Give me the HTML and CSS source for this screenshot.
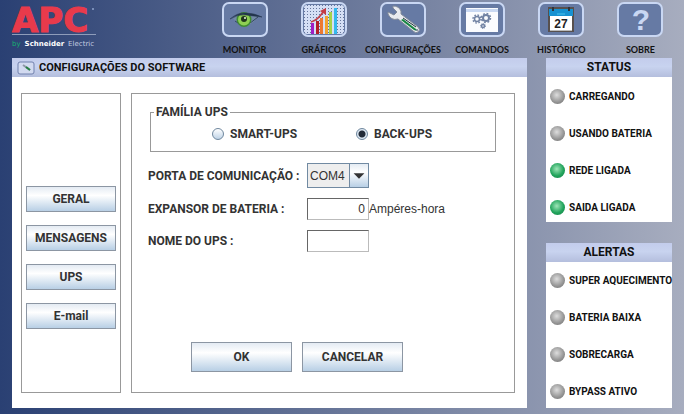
FILE: index.html
```html
<!DOCTYPE html>
<html lang="pt-BR">
<head>
  <meta charset="UTF-8" />
  <meta name="viewport" content="width=device-width, initial-scale=1.0"/>
  <title>APC - Configurações do Software</title>
  <link rel="stylesheet" href="styles.css">
</head>
<body>

  <header>
    <div class="logo">
      <div class="brand">APC<span class="dot"></span></div>
      <div class="tagline"><span class="by">by</span> <b>Schneider</b> <span class="electric">Electric</span></div>
    </div>

    <nav>
      <a href="#monitor">
        <svg class="icon" viewBox="0 0 46 35">
          <rect class="frame" x="1" y="1" width="44" height="33" rx="6"/>
          <path d="M11 16 Q22 8 36 15 Q30 23 22 24 Q15 22 11 16Z" fill="#7389a6"/>
          <path d="M13 19 Q22 28 36 15" fill="none" stroke="#32455f" stroke-width="1"/>
          <circle cx="22" cy="17.500" r="7.500" fill="#408b32"/>
          <circle cx="22" cy="17.500" r="6" fill="#8fcf53"/>
          <circle cx="22" cy="17" r="3" fill="#20351c"/>
          <circle cx="23" cy="16" r="1" fill="#e8f7d9"/>
          <path d="M8 17 Q16 10 24 11 Q32 11 40 15 Q31 14 24 13 Q16 12 8 17Z" fill="#23354c" stroke="#23354c" stroke-width="0.500"/>
        </svg>
        <span>MONITOR</span>
      </a>
      <a href="#graficos">
        <svg class="icon" viewBox="0 0 46 35">
          <defs>
            <pattern id="dots" width="3" height="3" patternUnits="userSpaceOnUse">
              <rect width="3" height="3" fill="#d5dff5"/>
              <rect width="1" height="1" fill="#66769c"/>
            </pattern>
          </defs>
          <rect class="frame" x="1" y="1" width="44" height="33" rx="6"/>
          <rect x="3" y="3" width="40" height="29" rx="3" fill="url(#dots)"/>
          <rect x="10" y="21" width="3" height="11" fill="#a01fc4"/>
          <rect x="15" y="19" width="3" height="13" fill="#b51e25"/>
          <rect x="19" y="16" width="3" height="16" fill="#ed7932"/>
          <rect x="24" y="14" width="3" height="18" fill="#f3a330"/>
          <rect x="28" y="10" width="3" height="22" fill="#a6d34a"/>
          <rect x="33" y="6" width="3" height="26" fill="#34b9ed"/>
          <path d="M10 20 Q17 18 22 10" fill="none" stroke="#c43c45" stroke-width="1.500"/>
          <path d="M19 9 L25 6 L25 13Z" fill="#c43c45"/>
        </svg>
        <span>GRÁFICOS</span>
      </a>
      <a href="#configuracoes">
        <svg class="icon" viewBox="0 0 46 35">
          <rect class="frame" x="1" y="1" width="44" height="33" rx="6"/>
          <path d="M13 4 Q19 4 21 9 L21 12 L38 25 Q41 28 38 30 Q36 32 33 29 L18 17 Q11 19 8 12 L8 10 L14 13 L17 10 L13 6Z" fill="#e9ebef" stroke="#828b9a" stroke-width="1"/>
          <path d="M23 17 L36 27 Q38 30 34 28 L21 18Z" fill="#168541"/>
          <path d="M23 16 L36 25" stroke="#20333a" stroke-width="1"/>
          <circle cx="37" cy="28" r="1" fill="#6e7989"/>
        </svg>
        <span>CONFIGURAÇÕES</span>
      </a>
      <a href="#comandos">
        <svg class="icon" viewBox="0 0 46 35">
          <rect class="frame" x="1" y="1" width="44" height="33" rx="6"/>
          <rect x="7" y="6" width="32" height="24" fill="#fafbfe"/>
          <path d="M7 8.500 H39" stroke="#c9d8f2" stroke-width="3"/>
          <g fill="none" stroke="#7182a3">
            <circle cx="18" cy="17" r="2.500" stroke-width="1.500"/>
            <circle cx="18" cy="17" r="4" stroke-width="1.500" stroke-dasharray="1.600 1.540"/>
            <circle cx="27" cy="16" r="3" stroke-width="2"/>
            <circle cx="27" cy="16" r="4.500" stroke-width="1.500" stroke-dasharray="1.800 1.730"/>
            <circle cx="24" cy="24" r="1.500" stroke-width="1.500"/>
            <circle cx="24" cy="24" r="2.500" stroke-width="1" stroke-dasharray="1 0.960"/>
          </g>
        </svg>
        <span>COMANDOS</span>
      </a>
      <a href="#historico">
        <svg class="icon" viewBox="0 0 46 35">
          <rect class="frame" x="1" y="1" width="44" height="33" rx="6"/>
          <rect x="10" y="5" width="26" height="25" fill="#57504e"/>
          <rect x="12" y="14" width="22" height="14" fill="#fff"/>
          <rect x="11" y="7" width="24" height="7" fill="#1791d1"/>
          <path d="M15 5 v4 M31 5 v4" stroke="#30343c" stroke-width="2"/>
          <path d="M19 12 h8" stroke="#49c4ef" stroke-width="1"/>
          <path d="M12 28.500 h22" stroke="#bbb" stroke-width="1"/>
          <text x="23" y="26" text-anchor="middle" class="day">27</text>
        </svg>
        <span>HISTÓRICO</span>
      </a>
      <a href="#sobre">
        <svg class="icon" viewBox="0 0 46 35">
          <rect class="frame" x="1" y="1" width="44" height="33" rx="6"/>
          <text x="24" y="28" text-anchor="middle" class="help">?</text>
        </svg>
        <span>SOBRE</span>
      </a>
    </nav>
  </header>

  <main>
    <section class="window">
      <h1 class="bar">
        <svg class="small-icon" viewBox="0 0 18 14">
          <rect x="1" y="1" width="16" height="12" rx="2" fill="#d2daf0" stroke="#7181ad" stroke-width="1"/>
          <path d="M6 4 L13 9" stroke="#8b97a4" stroke-width="2"/>
          <path d="M9 6 L13 9" stroke="#268044" stroke-width="2"/>
        </svg>
        CONFIGURAÇÕES DO SOFTWARE
      </h1>
      <div class="content">
        <div class="side-menu">
          <button type="button">GERAL</button>
          <button type="button">MENSAGENS</button>
          <button type="button">UPS</button>
          <button type="button">E-mail</button>
        </div>

        <form class="panel">
          <fieldset>
            <legend>FAMÍLIA UPS</legend>
            <label><input type="radio" name="family" value="smart"> SMART-UPS</label>
            <label><input type="radio" name="family" value="back" checked> BACK-UPS</label>
          </fieldset>

          <div class="fields">
            <label for="port">PORTA DE COMUNICAÇÃO :</label>
            <div class="select-box">
              <select id="port">
                <option>COM4</option>
              </select>
              <svg class="arrow" viewBox="0 0 20 25">
                <path d="M4 10 h12 l-6 6z" fill="#333"/>
              </svg>
            </div>

            <label for="battery">EXPANSOR DE BATERIA :</label>
            <div class="unit-box">
              <input type="text" id="battery" class="number" value="0"><span>Ampéres-hora</span>
            </div>

            <label for="upsName">NOME DO UPS :</label>
            <input type="text" id="upsName">
          </div>

          <div class="actions">
            <button type="submit">OK</button>
            <button type="button">CANCELAR</button>
          </div>
        </form>
      </div>
    </section>

    <aside>
      <section class="leds">
        <h2 class="bar">STATUS</h2>
        <ul>
          <li><span class="led"></span>CARREGANDO</li>
          <li><span class="led"></span>USANDO BATERIA</li>
          <li><span class="led on"></span>REDE LIGADA</li>
          <li><span class="led on"></span>SAIDA LIGADA</li>
        </ul>
      </section>

      <section class="leds alerts">
        <h2 class="bar">ALERTAS</h2>
        <ul>
          <li><span class="led"></span>SUPER AQUECIMENTO</li>
          <li><span class="led"></span>BATERIA BAIXA</li>
          <li><span class="led"></span>SOBRECARGA</li>
          <li><span class="led"></span>BYPASS ATIVO</li>
        </ul>
      </section>
    </aside>
  </main>

</body>
</html>
```
FILE: styles.css
```css
* {
  margin: 0;
  padding: 0;
  box-sizing: border-box;
}

body {
  min-height: 100vh;
  font-family: Roboto, "Liberation Sans", Arial, sans-serif;
  font-size: 12px;
  color: #333;
  background: linear-gradient(to right, #2a4073, #a7adbf);
}

header {
  display: flex;
  height: 58px;
  padding: 0 4px 0 12px;
}

/* Logo */
.logo {
  width: 193px;
}

.brand {
  display: flex;
  width: 88px;
  height: 34px;
  color: #e83a4b;
  font-family: "DejaVu Sans", sans-serif;
  font-size: 34px;
  font-weight: bold;
  line-height: 40px;
  -webkit-text-stroke: 1px #e83a4b;
}

.dot {
  width: 2px;
  height: 2px;
  margin: 8px 0 0 4px;
  border-radius: 50%;
  background: #8fa3cc;
}

.tagline {
  display: flex;
  gap: 4px;
  width: 84px;
  padding-top: 4px;
  border-top: 1px solid #8e9cba;
  color: #fff;
  font-family: "DejaVu Sans", sans-serif;
  font-size: 7px;
  line-height: 10px;
}

.by {
  color: #16b070;
}

.electric {
  color: #c3cce0;
}

/* Top menu */
nav {
  flex: 1;
  display: flex;
}

nav a {
  flex: 1 1 0;
  display: flex;
  flex-direction: column;
  align-items: center;
  gap: 6px;
  min-width: 0;
  padding-top: 2px;
  color: #111;
  font-family: Lato, sans-serif;
  font-size: 9px;
  font-weight: bold;
  line-height: 14px;
  text-decoration: none;
}

.icon {
  width: 46px;
  height: 35px;
}

.frame {
  fill: #667aa4;
  stroke: #c9d7f3;
  stroke-width: 2px;
}

.day {
  fill: #222;
  font: bold 12px "Liberation Sans", Arial, sans-serif;
}

.help {
  fill: #c9d7f3;
  font: bold 30px "Liberation Sans", Arial, sans-serif;
}

/* Main area */
main {
  display: flex;
  gap: 19px;
  padding: 0 12px 6px;
}

.window {
  flex: 1;
  background: #fff;
}

.bar {
  display: flex;
  align-items: center;
  height: 19px;
  background: linear-gradient(#c3ccec, #c8d3ef 45%, #b4bedd);
  color: #111;
  font-size: 12px;
  line-height: 19px;
}

.window .bar {
  gap: 4px;
  padding-left: 5px;
  font-size: 11px;
}

.small-icon {
  width: 18px;
  height: 14px;
}

.content {
  display: flex;
  gap: 10px;
  padding: 16px 12px 15px 9px;
}

.side-menu,
.panel {
  border: 1px solid #999;
}

.side-menu {
  display: flex;
  flex-direction: column;
  gap: 13px;
  width: 100px;
  padding: 92px 4px 0;
}

button {
  height: 26px;
  border: 1px solid #8c96a3;
  background: linear-gradient(#e4ebf3, #fff 35%, #b8cfe5);
  color: #333;
  font-family: inherit;
  font-size: 12px;
  font-weight: bold;
}

.panel {
  flex: 1;
  display: flex;
  flex-direction: column;
  min-height: 300px;
  padding: 10px 18px 20px 16px;
}

fieldset {
  display: grid;
  grid-template-columns: 144px 1fr;
  height: 48px;
  margin-left: 2px;
  padding: 6px 0 0 61px;
  border: 1px solid #999;
}

legend {
  margin-left: -58px;
  padding: 0 2px;
  font-weight: bold;
  line-height: 16px;
}

fieldset label {
  display: flex;
  align-items: center;
  gap: 6px;
  height: 16px;
  font-weight: bold;
}

input[type="radio"] {
  appearance: none;
  width: 12px;
  height: 12px;
  border: 1px solid #6f879e;
  border-radius: 50%;
  background: linear-gradient(#fff, #bfd3e6);
}

input[type="radio"]:checked {
  background: radial-gradient(circle, #222b38 3px, #dce7f2 4px);
}

.fields {
  display: grid;
  grid-template-columns: 159px 1fr;
  row-gap: 10px;
  align-items: center;
  padding-top: 11px;
}

.fields label {
  font-weight: bold;
  white-space: nowrap;
}

.select-box {
  display: grid;
  width: 62px;
}

.select-box select,
.arrow {
  grid-area: 1 / 1;
}

select {
  appearance: none;
  height: 25px;
  padding-left: 2px;
  border: 1px solid #718aa2;
  border-radius: 0;
  background: #eee;
  color: #333;
  font-family: "Liberation Sans", Arial, sans-serif;
  font-size: 12px;
}

.arrow {
  justify-self: end;
  width: 20px;
  height: 25px;
  border: 1px solid #718aa2;
  background: linear-gradient(#e4ebf3, #fff 35%, #b8cfe5);
  pointer-events: none;
}

.unit-box {
  display: flex;
  align-items: center;
  font-family: "Liberation Sans", Arial, sans-serif;
}

input[type="text"] {
  width: 62px;
  height: 22px;
  padding: 0 3px;
  border: 1px solid #bbb;
  border-top-color: #666;
  border-left-color: #666;
  background: #fff;
  color: #333;
  font-family: "Liberation Sans", Arial, sans-serif;
  font-size: 12px;
}

.number {
  text-align: right;
}

.actions {
  display: flex;
  gap: 10px;
  margin-top: auto;
  padding-left: 43px;
}

.actions button {
  width: 101px;
  height: 30px;
}

/* Status and alerts */
aside {
  display: flex;
  flex-direction: column;
  justify-content: space-between;
  width: 126px;
}

.leds {
  background: #fff;
}

.leds .bar {
  justify-content: center;
}

.leds ul {
  display: grid;
  gap: 21px;
  padding: 11px 0 7px 4px;
  list-style: none;
}

.alerts ul {
  padding: 10px 0 9px 4px;
}

.leds li {
  display: flex;
  align-items: center;
  gap: 4px;
  height: 16px;
  color: #111;
  font-size: 10px;
  font-weight: bold;
  white-space: nowrap;
}

.led {
  width: 15px;
  height: 15px;
  border-radius: 50%;
  background: radial-gradient(circle at 45% 40%, #ddd, #999 55%, #666);
}

.led.on {
  background: radial-gradient(circle at 45% 40%, #9fe6b8, #22a45c 55%, #117a43);
}
```
